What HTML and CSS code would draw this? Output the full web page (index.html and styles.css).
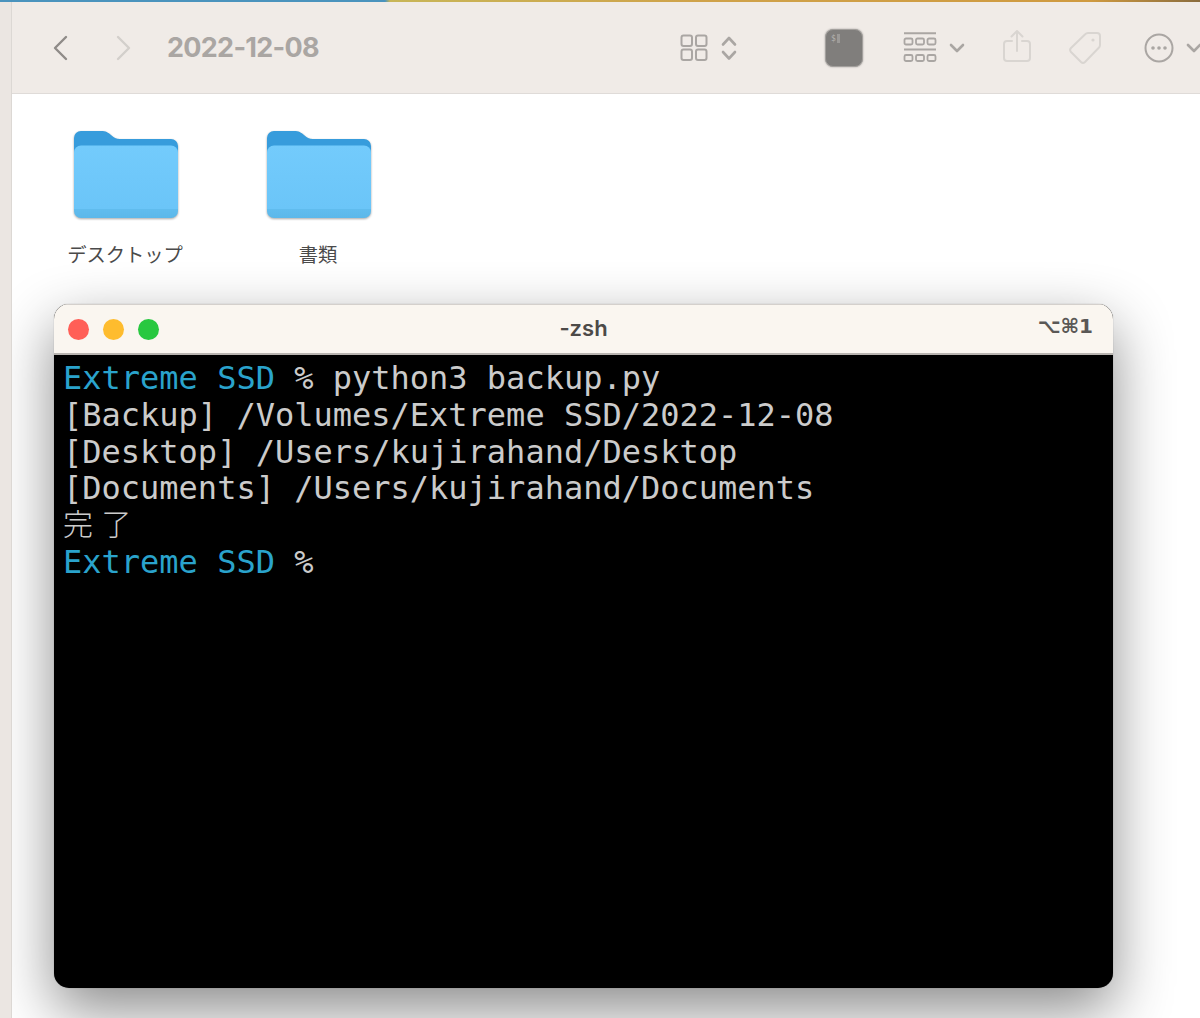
FILE: index.html
```html
<!DOCTYPE html>
<html lang="ja">
<head>
<meta charset="utf-8">
<title>2022-12-08</title>
<link rel="stylesheet" href="styles.css">
</head>
<body>
<div class="stripe"></div>
<div class="desktop">
  <div class="strip"></div>
  <main class="finder">
    <header class="toolbar">
      <svg class="ico back" width="16" height="26" viewBox="0 0 16 26"><path d="M14 2 3 13l11 11" fill="none" stroke="#8f8b88" stroke-width="2.4" stroke-linecap="round" stroke-linejoin="round"/></svg>
      <svg class="ico forward" width="16" height="26" viewBox="0 0 16 26"><path d="M2 2l11 11L2 24" fill="none" stroke="#d3cfcb" stroke-width="2.4" stroke-linecap="round" stroke-linejoin="round"/></svg>
      <h1 class="title">2022-12-08</h1>
      <svg class="ico grid" width="28" height="28" viewBox="0 0 28 28"><g fill="none" stroke="#aaa6a3" stroke-width="2"><rect x="1.5" y="1.5" width="10.5" height="10.5" rx="2"/><rect x="16" y="1.5" width="10.5" height="10.5" rx="2"/><rect x="1.5" y="15.5" width="10.5" height="10.5" rx="2"/><rect x="16" y="15.5" width="10.5" height="10.5" rx="2"/></g></svg>
      <svg class="ico updown" width="16" height="26" viewBox="0 0 16 26"><path d="M2 9.5 8 3l6 6.5M2 17l6 6.5 6-6.5" fill="none" stroke="#aaa6a3" stroke-width="2.6" stroke-linecap="round" stroke-linejoin="round"/></svg>
      <div class="ico appicon"><span class="prompt">$</span><span class="cursor"></span></div>
      <svg class="ico group" width="34" height="32" viewBox="0 0 34 32"><g fill="none" stroke="#aaa6a3"><path d="M1 1.2h32M1 17.5h32" stroke-width="2"/><g stroke-width="1.8"><rect x="1.5" y="6.5" width="8" height="6" rx="1.5"/><rect x="13" y="6.5" width="8" height="6" rx="1.5"/><rect x="24.5" y="6.5" width="8" height="6" rx="1.5"/><rect x="1.5" y="23" width="8" height="6" rx="1.5"/><rect x="13" y="23" width="8" height="6" rx="1.5"/><rect x="24.5" y="23" width="8" height="6" rx="1.5"/></g></g></svg>
      <svg class="ico chev1" width="16" height="10" viewBox="0 0 16 10"><path d="M2 2l6 6 6-6" fill="none" stroke="#aaa6a3" stroke-width="2.6" stroke-linecap="round" stroke-linejoin="round"/></svg>
      <svg class="ico share" width="28" height="34" viewBox="0 0 28 34"><g fill="none" stroke="#d9d5d1" stroke-width="2" stroke-linecap="round" stroke-linejoin="round"><path d="M9 12H4a3 3 0 0 0-3 3v14a3 3 0 0 0 3 3h20a3 3 0 0 0 3-3V15a3 3 0 0 0-3-3h-5"/><path d="M14 22V2M8.5 7.5 14 2l5.5 5.5"/></g></svg>
      <svg class="ico tag" width="34" height="34" viewBox="0 0 34 34"><g fill="none" stroke="#d9d5d1" stroke-width="2" stroke-linejoin="round"><path d="M20 2h9a3 3 0 0 1 3 3v9a4 4 0 0 1-1.200 2.800L17 31a3 3 0 0 1-4 0L3 21a3 3 0 0 1 0-4L17.200 3.200A4 4 0 0 1 20 2Z"/></g><circle cx="25" cy="9" r="1.600" fill="#d9d5d1"/></svg>
      <svg class="ico more" width="30" height="30" viewBox="0 0 30 30"><circle cx="15" cy="15" r="13.500" fill="none" stroke="#aaa6a3" stroke-width="2"/><g fill="#aaa6a3"><circle cx="9" cy="15" r="1.800"/><circle cx="15" cy="15" r="1.800"/><circle cx="21" cy="15" r="1.800"/></g></svg>
      <svg class="ico chev2" width="16" height="10" viewBox="0 0 16 10"><path d="M2 2l6 6 6-6" fill="none" stroke="#aaa6a3" stroke-width="2.6" stroke-linecap="round" stroke-linejoin="round"/></svg>
    </header>

    <section class="files">
      <figure class="file">
        <svg class="folder" width="104" height="88" viewBox="0 0 104 88"><use href="#folder-shape"/></svg>
        <figcaption>デスクトップ</figcaption>
      </figure>
      <figure class="file">
        <svg class="folder" width="104" height="88" viewBox="0 0 104 88"><use href="#folder-shape"/></svg>
        <figcaption>書類</figcaption>
      </figure>
    </section>

    <section class="terminal">
      <div class="titlebar">
        <div class="lights"><span class="light red"></span><span class="light yellow"></span><span class="light green"></span></div>
        <div class="wintitle">-zsh</div>
        <div class="shortcut">⌥⌘1</div>
      </div>
      <div class="console">
        <div class="line"><span class="host">Extreme SSD</span> % python3 backup.py</div>
        <div class="line">[Backup] /Volumes/Extreme SSD/2022-12-08</div>
        <div class="line">[Desktop] /Users/kujirahand/Desktop</div>
        <div class="line">[Documents] /Users/kujirahand/Documents</div>
        <div class="line"><span class="cjk">完了</span></div>
        <div class="line"><span class="host">Extreme SSD</span> %</div>
      </div>
    </section>
  </main>
</div>
<svg class="defs" width="0" height="0">
  <defs>
    <linearGradient id="front" x1="0" y1="0" x2="0" y2="1">
      <stop offset="0" stop-color="#73cbfc"/>
      <stop offset="0.87" stop-color="#6bc5f8"/>
      <stop offset="0.875" stop-color="#60bcee"/>
      <stop offset="1" stop-color="#5cb8ea"/>
    </linearGradient>
    <g id="folder-shape">
      <path d="M0 30V7a7 7 0 0 1 7-7H27c5 0 7 1.500 10 4s5 4 9 4H97a7 7 0 0 1 7 7V30Z" fill="#379cdc"/>
      <rect y="14.500" width="104" height="72.500" rx="7" fill="url(#front)"/>
    </g>
  </defs>
</svg>
</body>
</html>
```

FILE: styles.css
```css
html, body {
  margin: 0;
  padding: 0;
  height: 1018px;
  overflow: hidden;
  background: #fff;
}
body {
  font-family: "Inter", "Liberation Sans", sans-serif;
  display: flex;
  flex-direction: column;
}
.stripe {
  height: 2px;
  flex: none;
  background: linear-gradient(90deg, #4a93bd 0, #4a93bd 385px, #c8b658 390px, #cfa24a 700px, #cf9a40 1090px, #8a6c3e 1200px);
}
.desktop {
  flex: 1;
  display: flex;
  min-height: 0;
}
.strip {
  width: 11px;
  flex: none;
  background: #ebe6e2;
  border-right: 1px solid #dcd8d4;
}
.finder {
  flex: 1;
  min-width: 0;
  overflow: hidden;
  background: #fff;
}
.toolbar {
  height: 92px;
  box-sizing: border-box;
  border-bottom: 1px solid #dfdbd8;
  background: #f0ebe7;
  display: flex;
  align-items: center;
  padding-left: 40px;
}
.ico { flex: none; display: block; }
.forward { margin-left: 48px; }
.title {
  margin: 0 0 0 35px;
  width: 170px;
  flex: none;
  font-size: 27px;
  font-weight: 700;
  color: #aaa6a3;
  letter-spacing: -0.7px;
  white-space: nowrap;
}
.grid { margin-left: 343px; }
.updown { margin-left: 13px; }
.appicon {
  margin-left: 88px;
  width: 38px;
  height: 38px;
  box-sizing: border-box;
  border-radius: 8px;
  background: #807e7c;
  border: 1px solid #a3a09d;
  box-shadow: 0 0 2px rgba(0,0,0,.35);
  display: flex;
  align-items: flex-start;
  padding: 4px 0 0 5px;
  gap: 1px;
}
.prompt {
  font-family: "DejaVu Sans Mono", monospace;
  font-size: 8px;
  line-height: 10px;
  color: #b5b3b1;
}
.cursor {
  width: 3px;
  height: 9px;
  background: #9c9a98;
}
.group { margin-left: 40px; }
.chev1 { margin-left: 12px; }
.share { margin-left: 38px; margin-top: -3px; }
.tag { margin-left: 37px; }
.more { margin-left: 42px; }
.chev2 { margin-left: 12px; }
.files {
  height: 210px;
  box-sizing: border-box;
  padding: 37px 0 0 34px;
  display: flex;
  gap: 33px;
}
.file {
  margin: 0;
  width: 160px;
  display: flex;
  flex-direction: column;
  align-items: center;
}
.folder {
  display: block;
  filter: drop-shadow(0 1px 1px rgba(0,0,0,.35));
}
.file figcaption {
  margin: 22px 2px 0 0;
  font-family: "Noto Sans CJK JP", sans-serif;
  font-size: 19.300px;
  line-height: 26px;
  color: #4a4a4a;
  white-space: nowrap;
}
.terminal {
  margin-left: 42px;
  width: 1059px;
  height: 684px;
  box-sizing: border-box;
  border-radius: 15px;
  overflow: hidden;
  display: flex;
  flex-direction: column;
  background: #000;
  box-shadow: 0 22px 58px rgba(0,0,0,.46), 0 0 1px rgba(0,0,0,.4);
}
.titlebar {
  height: 51px;
  flex: none;
  box-sizing: border-box;
  background: #faf6f0;
  border-top: 1px solid #d4d0cc;
  border-bottom: 2px solid #b8b4b0;
  position: relative;
  display: flex;
  align-items: center;
}
.lights {
  display: flex;
  gap: 14px;
  padding-left: 14px;
}
.light {
  width: 21px;
  height: 21px;
  border-radius: 50%;
}
.red { background: #ff5f57; }
.yellow { background: #febc2e; }
.green { background: #28c840; }
.wintitle {
  position: absolute;
  left: 0;
  right: 0;
  top: 9px;
  text-align: center;
  font-size: 22px;
  line-height: 28px;
  font-weight: 600;
  color: #4c4a48;
}
.shortcut {
  position: absolute;
  right: 20px;
  top: 7px;
  font-family: "DejaVu Sans", sans-serif;
  font-size: 20px;
  line-height: 28px;
  font-weight: 700;
  color: #5a5856;
}
.console {
  flex: 1;
  padding: 5px 0 0 9px;
  font-family: "DejaVu Sans Mono", monospace;
  font-size: 32px;
  line-height: 36.750px;
  color: #cbcbcb;
}
.line {
  height: 36.750px;
  white-space: pre;
}
.host { color: #2aa3cc; }
.cjk {
  font-family: "Noto Sans CJK JP", sans-serif;
  font-size: 30px;
  font-weight: 300;
  letter-spacing: 8.500px;
  vertical-align: 2px;
  line-height: 30px;
}
.defs { position: absolute; }
```
